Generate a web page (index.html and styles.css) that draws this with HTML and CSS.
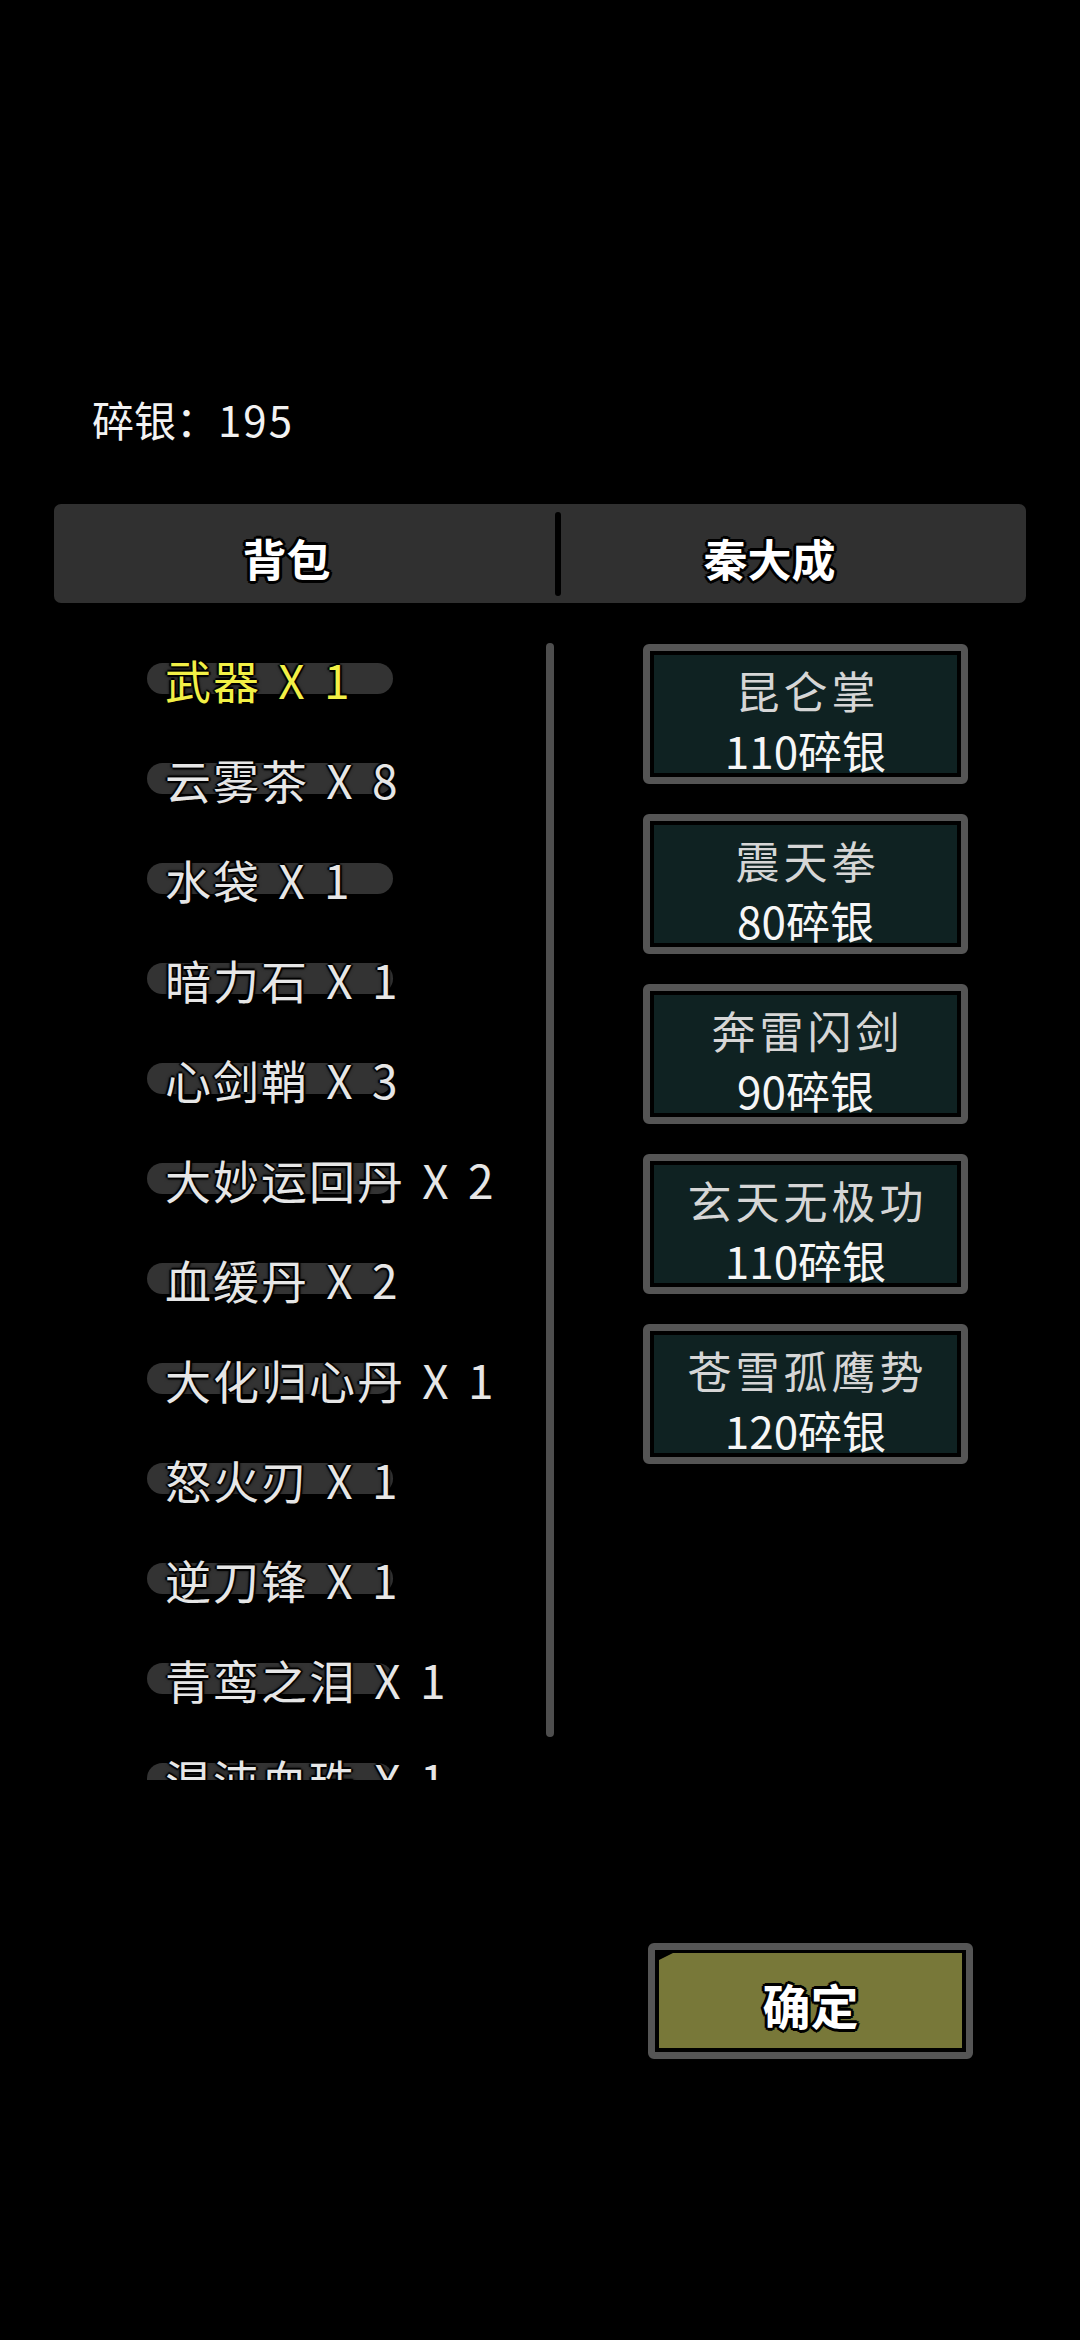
FILE: index.html
```html
<!DOCTYPE html>
<html lang="zh-CN">
<head>
<meta charset="utf-8">
<title>背包</title>
<link rel="stylesheet" href="styles.css">
</head>
<body>
<div class="screen">
  <div class="wallet">碎银：<span class="wallet-amount">195</span></div>

  <div class="tabs">
    <div class="tab tab-left"><span class="tab-label">背包</span></div>
    <div class="tab-divider"></div>
    <div class="tab tab-right"><span class="tab-label">秦大成</span></div>
  </div>

  <div class="main">
    <div class="bag">
      <ul class="items">
        <li class="item selected"><span class="pill"></span><span class="label">武器 X 1</span></li>
        <li class="item"><span class="pill"></span><span class="label">云雾茶 X 8</span></li>
        <li class="item"><span class="pill"></span><span class="label">水袋 X 1</span></li>
        <li class="item"><span class="pill"></span><span class="label">暗力石 X 1</span></li>
        <li class="item"><span class="pill"></span><span class="label">心剑鞘 X 3</span></li>
        <li class="item"><span class="pill"></span><span class="label">大妙运回丹 X 2</span></li>
        <li class="item"><span class="pill"></span><span class="label">血缓丹 X 2</span></li>
        <li class="item"><span class="pill"></span><span class="label">大化归心丹 X 1</span></li>
        <li class="item"><span class="pill"></span><span class="label">怒火刃 X 1</span></li>
        <li class="item"><span class="pill"></span><span class="label">逆刀锋 X 1</span></li>
        <li class="item"><span class="pill"></span><span class="label">青鸾之泪 X 1</span></li>
        <li class="item"><span class="pill"></span><span class="label">混沌血珠 X 1</span></li>
      </ul>
      <div class="scrollbar"></div>
    </div>

    <div class="shop">
      <div class="card"><div class="card-inner"><div class="name">昆仑掌</div><div class="price">110碎银</div></div></div>
      <div class="card"><div class="card-inner"><div class="name">震天拳</div><div class="price">80碎银</div></div></div>
      <div class="card"><div class="card-inner"><div class="name">奔雷闪剑</div><div class="price">90碎银</div></div></div>
      <div class="card"><div class="card-inner"><div class="name">玄天无极功</div><div class="price">110碎银</div></div></div>
      <div class="card"><div class="card-inner"><div class="name">苍雪孤鹰势</div><div class="price">120碎银</div></div></div>
    </div>
  </div>

  <div class="actions">
    <button class="confirm"><span class="confirm-face">确定</span></button>
  </div>
</div>
</body>
</html>
```

FILE: styles.css
```css
* {
  box-sizing: border-box;
}

html, body {
  margin: 0;
  padding: 0;
  background: #000;
}

body {
  font-family: "Noto Sans CJK SC", "Noto Sans", sans-serif;
  color: #f0f0f0;
}

.screen {
  width: 1080px;
  height: 2340px;
  overflow: hidden;
  background: #000;
}

.wallet {
  margin-top: 394px;
  padding-left: 92px;
  font-size: 42px;
  line-height: 50px;
  color: #f2f2f2;
}

.wallet-amount {
  letter-spacing: 2px;
}

.tabs {
  margin: 60px 54px 0;
  height: 99px;
  background: #303030;
  border-radius: 7px;
  display: flex;
  align-items: center;
}

.tab {
  height: 100%;
  display: flex;
  align-items: center;
  justify-content: center;
}

.tab-left {
  width: 501px;
  padding-right: 36px;
}

.tab-right {
  flex: 1;
  padding-right: 48px;
}

.tab-divider {
  width: 6px;
  height: 84px;
  background: #000;
  border-radius: 3px;
}

.tab-label {
  font-size: 44px;
  font-weight: 700;
  color: #fff;
  line-height: 1;
  padding-top: 8px;
  text-shadow:
    3px 0 0 #000, -3px 0 0 #000, 0 3px 0 #000, 0 -3px 0 #000,
    2px 2px 0 #000, -2px 2px 0 #000, 2px -2px 0 #000, -2px -2px 0 #000,
    0 0 3px #000;
}

.main {
  margin-top: 26px;
  height: 1151px;
  display: flex;
}

.bag {
  width: 554px;
  display: flex;
}

.items {
  list-style: none;
  margin: 0;
  padding: 0 0 0 147px;
  width: 546px;
  height: 1151px;
  overflow: hidden;
}

.item {
  height: 100px;
  display: grid;
  align-items: center;
}

.pill {
  grid-area: 1 / 1;
  width: 246px;
  height: 31px;
  margin-top: -2px;
  border-radius: 16px;
  background: #333;
}

.label {
  grid-area: 1 / 1;
  padding-left: 18px;
  font-size: 46px;
  line-height: 1;
  white-space: nowrap;
  letter-spacing: 2px;
  word-spacing: 5px;
  color: #e6e6e6;
  text-shadow:
    2px 0 1px #000, -2px 0 1px #000, 0 2px 1px #000, 0 -2px 1px #000,
    0 0 4px #000;
}

.item.selected .label {
  color: #f2f046;
}

.scrollbar {
  width: 8px;
  height: 1094px;
  margin-top: 14px;
  border-radius: 4px;
  background: #4e4e4e;
}

.shop {
  margin-left: 89px;
  padding-top: 15px;
  display: flex;
  flex-direction: column;
  gap: 30px;
}

.card {
  width: 325px;
  height: 140px;
  border: 7px solid #555;
  border-radius: 6px;
  background: #000;
  padding: 4px;
}

.card-inner {
  height: 100%;
  background: #0f2222;
  padding-top: 5px;
  text-align: center;
  font-size: 44px;
  line-height: 60px;
  white-space: nowrap;
}

.name {
  color: #d6d6d6;
  letter-spacing: 4px;
  padding-left: 4px;
}

.price {
  color: #f6f6f6;
}

.actions {
  margin-top: 163px;
  padding-left: 648px;
}

.confirm {
  display: block;
  margin: 0;
  width: 325px;
  height: 116px;
  border: 7px solid #555;
  border-radius: 6px;
  background: #000;
  padding: 3px 4px 4px;
  font-family: inherit;
  cursor: pointer;
}

.confirm-face {
  display: flex;
  align-items: center;
  justify-content: center;
  height: 100%;
  background: #787839;
  clip-path: polygon(14px 0, 100% 0, 100% 100%, 0 100%, 0 7px);
  font-size: 48px;
  font-weight: 700;
  color: #fff;
  line-height: 1;
  padding-top: 6px;
  text-shadow:
    3px 0 0 #000, -3px 0 0 #000, 0 3px 0 #000, 0 -3px 0 #000,
    2px 2px 0 #000, -2px 2px 0 #000, 2px -2px 0 #000, -2px -2px 0 #000,
    0 0 3px #000;
}
```
